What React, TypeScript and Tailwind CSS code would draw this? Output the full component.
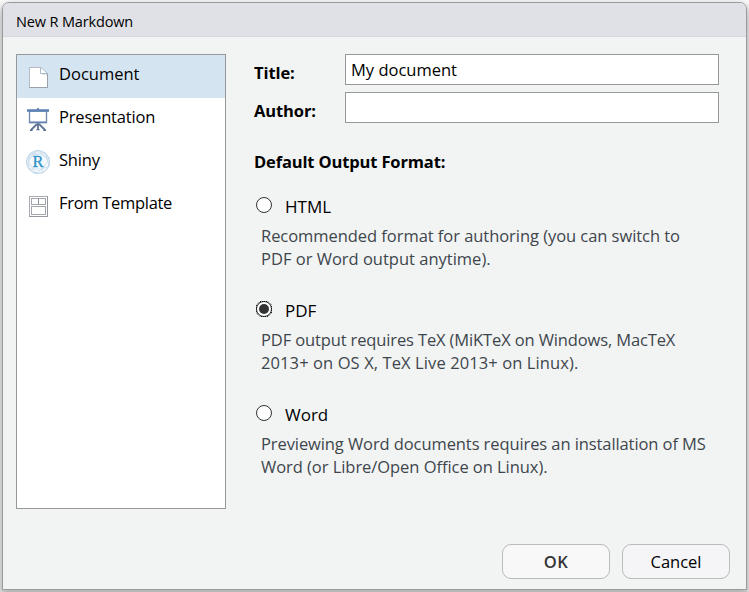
import type { ReactNode } from "react";

function DocumentIcon() {
  return (
    <svg width="24" height="26" viewBox="0 0 24 26" fill="none">
      <path d="M3.5 3.5H15L21.5 9.5V23.5H3.5Z" fill="#fff" stroke="#b3bac4" />
      <path d="M3.5 23.5H21.5V9.5" stroke="#9aa0aa" />
      <path d="M14.5 4V9.5H21.5" stroke="#a9bccb" />
      <path d="M16 10.5H21" stroke="#dce3ea" />
    </svg>
  );
}

function PresentationIcon() {
  return (
    <svg width="24" height="26" viewBox="0 0 24 26" fill="none">
      <path d="M12 1.2V3" stroke="#4f719f" strokeWidth="2" />
      <rect x="3.5" y="4" width="17" height="11.5" fill="#fff" stroke="#6f89ae" strokeWidth="1.3" />
      <path d="M3 15.3H21" stroke="#6584b0" strokeWidth="1.8" />
      <path d="M1 3.5H23" stroke="#5b80b5" strokeWidth="2.6" />
      <path d="M12 16V22.5M11 17L5 23M13 17L19 23" stroke="#5f7698" strokeWidth="1.8" />
      <path d="M4 23.3H6.5M10.5 22.6H13.5M17.5 23.3H20" stroke="#536d93" strokeWidth="1.4" />
    </svg>
  );
}

function ShinyIcon() {
  return (
    <svg width="26" height="26" viewBox="0 0 26 26" fill="none">
      <circle cx="13" cy="13" r="11.6" fill="#f7fbfe" stroke="#bdd5e7" strokeWidth="0.8" />
      <path
        d="M13 1.4L5 5L1.5 12L4 20L10 24.2L18 23.8L24 17L24.4 10L20 4ZM5 5L13 4L20 4L23 12L24 17L17 20L18 23.8M17 20L10 24.2L8 20L4 20L3.5 13L5 5M1.5 12L8 5L13 1.4L18 6L24.4 10M3.5 13L8 20L17 20L23 12L18 6L8 5Z"
        stroke="#b2cee3"
        strokeWidth="0.55"
      />
      <text x="13" y="18.3" textAnchor="middle" fontSize="16.5" fill="#2f92c6" stroke="#2f92c6" strokeWidth="0.3" className="font-['Liberation_Serif',serif]">
        R
      </text>
    </svg>
  );
}

function TemplateIcon() {
  return (
    <svg width="24" height="26" viewBox="0 0 24 26" fill="none">
      <rect x="3.5" y="3.5" width="18" height="20" fill="#fff" stroke="#a9acb2" />
      <path d="M3.5 23.5H21.5V3.5" stroke="#94979e" />
      <rect x="5.5" y="5.5" width="14" height="6" stroke="#a3a6ad" />
      <path d="M12.5 5.5V11.5" stroke="#8f939b" />
      <rect x="5.5" y="13.5" width="14" height="8" stroke="#a3a6ad" />
    </svg>
  );
}

function NavItem({ icon, selected = false, children }: { icon: ReactNode; selected?: boolean; children: ReactNode }) {
  return (
    <li className={`flex h-[43px] ${selected ? "bg-[#d5e4f1]" : ""}`}>
      <span className="mt-[9px] ml-[9px] w-[33px] shrink-0">{icon}</span>
      <span className="mt-[7px] leading-6">{children}</span>
    </li>
  );
}

function Radio({ checked = false }: { checked?: boolean }) {
  return (
    <svg width="16" height="16" viewBox="0 0 16 16" className="shrink-0">
      <circle cx="8" cy="8" r="7.5" fill="#fff" stroke="#333" />
      {checked && <circle cx="8" cy="8" r="5" fill="#333" />}
      {checked && (
        <path d="M4 .5H12L15.5 4V12L12 15.5H4L.5 12V4Z" fill="none" stroke="#111" strokeDasharray="1 1" />
      )}
    </svg>
  );
}

function Format({ name, checked, children }: { name: ReactNode; checked?: boolean; children: ReactNode }) {
  return (
    <div className="h-[104px]">
      <div className="flex h-6 items-center pl-[2px]">
        <span className="-mt-[3px]"><Radio checked={checked} /></span>
        <span className="ml-[13px] pt-[2px] text-[17px] leading-6">{name}</span>
      </div>
      <div className="mt-[6px] pl-[7px] text-[16.5px] leading-[23px] whitespace-nowrap text-[#3e464c]">{children}</div>
    </div>
  );
}

export default function App() {
  return (
    <div className="h-[592px] w-[749px] overflow-hidden bg-white p-[2px] font-['Open_Sans','Noto_Sans',sans-serif] text-[16.5px] text-black">
      <div className="flex h-[588px] w-[745px] flex-col overflow-hidden rounded-t-[7px] border border-[#999b9c] bg-[#f2f4f4] shadow-[0_5px_10px_3px_rgba(0,0,0,0.3)]">
        <header className="h-[34px] shrink-0 border-b border-[#d5d7df] bg-[#e0e1e6] pl-[13px] text-[14.5px] leading-[38px]">
          <span className="tracking-[-0.15px]">New R Markdown</span>
        </header>
        <main className="flex px-[13px] pt-[17px]">
          <ul className="h-[455px] w-[210px] shrink-0 border border-[#969899] bg-white">
            <NavItem selected icon={<DocumentIcon />}>Document</NavItem>
            <NavItem icon={<PresentationIcon />}><span className="tracking-[-0.18px]">Presentation</span></NavItem>
            <NavItem icon={<div className="-mt-px -ml-px"><ShinyIcon /></div>}><span className="tracking-[-0.2px]">Shiny</span></NavItem>
            <NavItem icon={<TemplateIcon />}><span className="tracking-[-0.3px]">From Template</span></NavItem>
          </ul>
          <section className="ml-7 w-[465px] shrink-0">
            <div className="flex">
              <label className="w-[91px] pt-[3px] font-bold leading-[31px] tracking-[-0.1px]">Title:</label>
              <div className="h-[31px] w-[374px] border border-[#969899] bg-white pl-[5px] leading-[29px]">My document</div>
            </div>
            <div className="mt-[4px] flex">
              <label className="w-[91px] pt-[3px] font-bold leading-[31px] tracking-[-0.1px]">Author:</label>
              <div className="h-[31px] w-[374px] border border-[#969899] bg-white" />
            </div>
            <h2 className="mt-[24px] font-bold leading-6 tracking-[-0.14px]">Default Output Format:</h2>
            <div className="mt-[20px]">
              <Format name="HTML">
                <p className="tracking-[-0.05px]">Recommended format for authoring (you can switch to</p>
                <p>PDF or Word output anytime).</p>
              </Format>
              <Format name="PDF" checked>
                <p className="tracking-[-0.13px]">PDF output requires TeX (MiKTeX on Windows, MacTeX</p>
                <p className="tracking-[0.1px]">2013+ on OS X, TeX Live 2013+ on Linux).</p>
              </Format>
              <Format name="Word">
                <p className="tracking-[-0.09px]">Previewing Word documents requires an installation of MS</p>
                <p className="tracking-[-0.05px]">Word (or Libre/Open Office on Linux).</p>
              </Format>
            </div>
          </section>
        </main>
        <footer className="mt-auto mb-[10px] flex justify-end gap-3 pr-4">
          <button className="h-[35px] w-[108px] rounded-[9px] border border-[#bbbcbd] bg-[#f8f8f9] pt-[2px] font-semibold tracking-[0.6px] text-[#333]">OK</button>
          <button className="h-[35px] w-[108px] rounded-[9px] border border-[#bbbcbd] bg-[#f5f5f8] pt-[2px]">Cancel</button>
        </footer>
      </div>
    </div>
  );
}
